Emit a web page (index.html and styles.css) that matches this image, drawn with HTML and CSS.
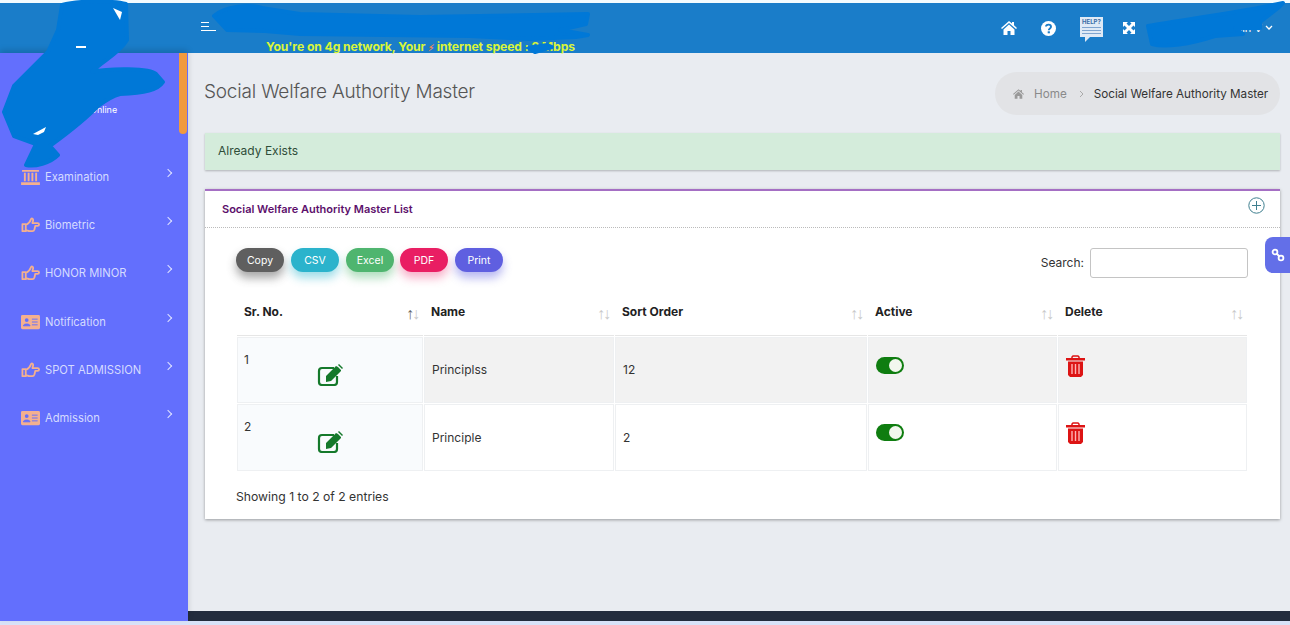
FILE: index.html
```html
<!DOCTYPE html>
<html lang="en">
<head>
  <meta charset="UTF-8" />
  <title>Social Welfare Authority Master</title>
  <link rel="stylesheet" href="styles.css">
</head>
<body>
  <svg class="defs" width="0" height="0">
    <symbol id="i-hand" viewBox="0 0 20 16">
      <path d="M1.500 7h3.500v7.500H1.500zM5 8c2.500-1 4.500-3 5.500-6 .5-1.500 2.500-1 2.300 1l-.8 3h5.500c2 0 2 3 0 3h-2.500l-.8 3.500c-.3 1-1 2-2.200 2H9c-1.500 0-2.500-1-4-1" fill="none" stroke="currentColor" stroke-width="1.900" stroke-linejoin="round"/>
    </symbol>
    <symbol id="i-card" viewBox="0 0 20 16">
      <rect width="20" height="15" y=".5" rx="1.500" fill="currentColor"/>
      <circle cx="6" cy="6" r="2" fill="#636ffd"/>
      <path d="M2.500 12c0-2.500 7-2.500 7 0zM11.500 5h6M11.500 8h6M11.500 11h6" fill="#636ffd" stroke="#636ffd"/>
    </symbol>
    <symbol id="i-bank" viewBox="0 0 20 17">
      <path d="M1 1h18v2H1zM0 14h20v3H0zM3 4h2v9H3zM7 4h2v9H7zM11 4h2v9h-2zM15 4h2v9h-2z" fill="currentColor"/>
    </symbol>
    <symbol id="i-edit" viewBox="0 0 26 22">
      <path d="M17 4H5a3 3 0 0 0-3 3v11a3 3 0 0 0 3 3h12a3 3 0 0 0 3-3v-6" fill="none" stroke="currentColor" stroke-width="2.200"/>
      <path d="M9 12 19 2l2 1 3 3v1L14 17l-5 1zM21 1l1-1 4 4-1 1z" fill="currentColor"/>
    </symbol>
    <symbol id="i-trash" viewBox="0 0 19 22">
      <path d="M6 3V2l1-1h5l1 1v1" fill="none" stroke="currentColor" stroke-width="1.500"/>
      <path d="M0 3h19v2.500H0zM2 6.500h15V20l-2 2H4l-2-2z" fill="currentColor"/>
      <path d="M6 9v10M9.500 9v10M13 9v10" stroke="#ffb3b3" stroke-width="1.400"/>
    </symbol>
  </svg>

  <div class="top-strip"></div>

  <header class="topbar">
    <div class="topbar-brand"></div>
    <div class="topbar-left">
      <span class="burger"><i></i><i></i><i></i></span>
      <div class="net-speed">You're on 4g network, Your <span class="bolt">&#9889;&#xFE0E;</span> internet speed : 2 Mbps</div>
    </div>
    <div class="topbar-right">
      <svg class="ico" width="16" height="14" viewBox="0 0 16 14"><path d="M8 0 0 7l1 1 7-6 7 6 1-1-3-2.700V1h-2v1.500zM2.500 8.500 8 3.500l5.500 5V14H9.500v-4h-3v4h-4z" fill="#fff"/></svg>
      <svg class="ico" width="15" height="15" viewBox="0 0 15 15"><circle cx="7.500" cy="7.500" r="7.500" fill="#fff"/><path d="M5 5.500C5 3 10 3 10 5.800 10 7.500 7.800 7.500 7.800 9.300" fill="none" stroke="#1a7dc9" stroke-width="1.900"/><rect x="6.700" y="10.300" width="2.200" height="2" fill="#1a7dc9"/></svg>
      <span class="help-bubble">
        <span class="help-word">HELP?</span>
        <i></i><i></i><i></i>
      </span>
      <svg class="ico expand" width="12" height="12" viewBox="0 0 12 12"><path d="M0 0h5L3.500 1.500 6 4l2.500-2.500L7 0h5v5l-1.500-1.500L8 6l2.500 2.500L12 7v5H7l1.500-1.500L6 8l-2.500 2.500L5 12H0V7l1.500 1.500L4 6 1.500 3.500 0 5z" fill="#fff"/></svg>
      <span class="user-name">Admin V</span>
      <svg class="chev" width="8" height="6" viewBox="0 0 8 6"><path d="m1 1 3 3 3-3" fill="none" stroke="#fff" stroke-width="1.300"/></svg>
    </div>
  </header>

  <div class="main">
    <aside class="sidebar">
      <div class="thumb"></div>
      <div class="user-block">
        <div class="user-status"><span class="dot"></span>Online</div>
      </div>
      <nav>
        <a class="nav-item"><svg class="nav-ico"><use href="#i-bank"/></svg><span>Examination</span><b></b></a>
        <a class="nav-item"><svg class="nav-ico"><use href="#i-hand"/></svg><span>Biometric</span><b></b></a>
        <a class="nav-item"><svg class="nav-ico"><use href="#i-hand"/></svg><span>HONOR MINOR</span><b></b></a>
        <a class="nav-item"><svg class="nav-ico"><use href="#i-card"/></svg><span>Notification</span><b></b></a>
        <a class="nav-item"><svg class="nav-ico"><use href="#i-hand"/></svg><span>SPOT ADMISSION</span><b></b></a>
        <a class="nav-item"><svg class="nav-ico"><use href="#i-card"/></svg><span>Admission</span><b></b></a>
      </nav>
    </aside>

    <div class="right-col">
      <main class="content">
        <div class="title-row">
          <h1>Social Welfare Authority Master</h1>
          <div class="crumbs">
            <svg width="11" height="10" viewBox="0 0 16 14"><path d="M8 0 0 7l1 1 7-6 7 6 1-1-3-2.700V1h-2v1.500zM2.500 8.500 8 3.500l5.500 5V14H9.500v-4h-3v4h-4z" fill="#999"/></svg>
            <span class="crumb-home">Home</span>
            <svg width="5" height="8" viewBox="0 0 5 8"><path d="m1 1 3 3-3 3" fill="none" stroke="#aaa"/></svg>
            <span class="crumb-now">Social Welfare Authority Master</span>
          </div>
        </div>

        <div class="alert">Already Exists</div>

        <section class="card">
          <div class="card-head">
            <h2>Social Welfare Authority Master List</h2>
            <svg width="17" height="17" viewBox="0 0 17 17"><circle cx="8.500" cy="8.500" r="7.700" fill="none" stroke="#3f7f8f"/><path d="M8.500 4v9M4 8.500h9" stroke="#3f7f8f"/></svg>
          </div>
          <div class="card-body">
            <div class="toolbar">
              <div class="btns">
                <button class="btn btn-copy">Copy</button>
                <button class="btn btn-csv">CSV</button>
                <button class="btn btn-excel">Excel</button>
                <button class="btn btn-pdf">PDF</button>
                <button class="btn btn-print">Print</button>
              </div>
              <label class="search">Search: <input type="text" /></label>
            </div>

            <table>
              <thead>
                <tr>
                  <th class="c1">Sr. No.<span class="sort"><em>↑</em>↓</span></th>
                  <th class="c2">Name<span class="sort">↑↓</span></th>
                  <th class="c3">Sort Order<span class="sort">↑↓</span></th>
                  <th class="c4">Active<span class="sort">↑↓</span></th>
                  <th class="c5">Delete<span class="sort">↑↓</span></th>
                </tr>
              </thead>
              <tbody>
                <tr class="odd">
                  <td class="sr"><div>1</div><svg class="edit"><use href="#i-edit"/></svg></td>
                  <td>Principlss</td>
                  <td>12</td>
                  <td class="top"><span class="switch"></span></td>
                  <td class="top"><svg class="trash"><use href="#i-trash"/></svg></td>
                </tr>
                <tr class="even">
                  <td class="sr"><div>2</div><svg class="edit"><use href="#i-edit"/></svg></td>
                  <td>Principle</td>
                  <td>2</td>
                  <td class="top"><span class="switch"></span></td>
                  <td class="top"><svg class="trash"><use href="#i-trash"/></svg></td>
                </tr>
              </tbody>
            </table>

            <div class="info">Showing 1 to 2 of 2 entries</div>
          </div>
        </section>
      </main>
      <footer class="footer"></footer>
    </div>
  </div>
  <div class="bottom-strip"></div>

  <a class="side-tab">
    <svg width="14" height="14" viewBox="0 0 14 14"><g fill="none" stroke="#fff" stroke-width="1.800"><circle cx="4" cy="4" r="2.400"/><circle cx="10" cy="10" r="2.400"/><path d="m5.500 5.500 3 3"/></g></svg>
  </a>

  <!-- blue marker scribbles that sit on top of the page -->
  <svg class="scribble" width="1290" height="625" viewBox="0 0 1290 625">
    <g fill="#0078d7" stroke="#0078d7" stroke-width="4" stroke-linejoin="round">
      <path d="M62 5C80 0 115 1 126 4L127 40C118 55 100 62 92 72 110 68 150 68 156 74L163 82C158 90 145 93 120 94 112 96 106 100 98 106 85 120 65 135 50 146L58 155C50 163 35 167 26 165L36 144 14 136 4 112 14 86 48 52 58 30Z"/>
      <path d="M214 16C225 6 250 4 262 8L300 14 420 17 588 14 586 24 560 30 588 35 576 37 530 39 470 36 300 34 265 31 227 30Z"/>
      <path d="M1148 26C1180 20 1230 14 1283 3L1278 8 1260 22 1260 28 1235 28 1243 34 1215 36C1190 44 1165 48 1152 44Z"/>
      <path d="M529 48 547 45 552 47 535 52Z"/>
    </g>
    <g fill="#fff">
      <path d="M113 8 122 12 120 20Z"/>
      <rect x="76" y="46" width="10" height="2"/>
      <path d="M33 134 46 127 44 132 38 135Z"/>
    </g>
  </svg>
</body>
</html>
```

FILE: styles.css
```css
* {
  box-sizing: border-box;
}
html, body {
  height: 625px;
  overflow: hidden;
}
body {
  margin: 0;
  font-family: Inter, "Open Sans", sans-serif;
  font-size: 12px;
  color: #333;
  background: #e9ecf1;
  display: flex;
  flex-direction: column;
}
.defs {
  position: absolute;
}
.top-strip {
  height: 3px;
  background: #f3fbfe;
}
.bottom-strip {
  height: 4px;
  background: #d8e2f8;
}

/* top bar */
.topbar {
  height: 50px;
  background: #1a7dc9;
  display: flex;
  color: #fff;
}
.topbar-brand {
  width: 188px;
}
.topbar-left {
  flex: 1;
  padding: 19px 0 0 13px;
  position: relative;
}
.burger {
  display: flex;
  flex-direction: column;
  gap: 3px;
  width: 15px;
}
.burger i {
  height: 1px;
  background: #fff;
}
.burger i:nth-child(1), .burger i:nth-child(2) {
  width: 8px;
}
.net-speed {
  margin: 9px 0 0 65px;
  color: #d9f53a;
  font-size: 12.200px;
  line-height: 14px;
  font-weight: 700;
  white-space: nowrap;
  letter-spacing: -0.1px;
}
.bolt {
  color: #e8875a;
  font-size: 9px;
}
.topbar-right {
  display: flex;
  align-items: center;
  padding: 0 17px 0 0;
  height: 50px;
}
.ico {
  display: block;
}
.topbar-right .ico {
  margin-right: 24px;
}
.topbar-right .expand {
  margin: 0 0 0 20px;
}
.help-bubble {
  width: 23px;
  height: 20px;
  margin: -3px 0 0 0;
  background: #dfeaf6;
  position: relative;
  display: flex;
  flex-direction: column;
  gap: 2px;
  padding: 1px 2px;
}
.help-bubble:after {
  content: "";
  position: absolute;
  left: 5px;
  top: 20px;
  border-top: 5px solid #dfeaf6;
  border-right: 5px solid transparent;
}
.help-word {
  font-size: 6px;
  line-height: 7px;
  color: #3a6ea5;
  font-weight: 700;
}
.help-bubble i {
  height: 1px;
  background: #7fa5d0;
}
.user-name {
  margin-left: 15px;
  width: 112px;
  font-size: 11px;
  text-align: right;
}
.chev {
  margin-left: 3px;
}

/* layout */
.main {
  flex: 1;
  display: flex;
  min-height: 0;
}
.sidebar {
  width: 188px;
  background: #636ffd;
  position: relative;
  box-shadow: 0 -3px 6px rgba(0, 0, 0, 0.15);
}
.thumb {
  position: absolute;
  right: 1px;
  top: 0;
  width: 8px;
  height: 81px;
  background: #f09a3e;
  border-radius: 0 0 4px 4px;
}
.user-block {
  height: 100px;
  padding: 51px 0 0 79px;
}
.user-status {
  font-size: 9px;
  color: #fff;
  display: flex;
  align-items: center;
  gap: 4px;
}
.dot {
  width: 7px;
  height: 7px;
  background: #3fc380;
  border-radius: 50%;
}
.nav-item {
  height: 48.200px;
  display: flex;
  align-items: center;
  padding: 0 17px 0 21px;
  color: #d5dbff;
  font-size: 11.200px;
}
.nav-item span {
  flex: 1;
}
.nav-item b {
  width: 6px;
  height: 6px;
  border-top: 1px solid #dfe3ff;
  border-right: 1px solid #dfe3ff;
  transform: rotate(45deg);
  margin-top: -8px;
}
.nav-ico {
  width: 19px;
  height: 16px;
  color: #f4b08f;
  margin-right: 5px;
}

/* content */
.right-col {
  flex: 1;
  display: flex;
  flex-direction: column;
  min-width: 0;
}
.content {
  flex: 1;
  padding: 19px 10px 0 17px;
}
.footer {
  height: 10px;
  background: #232c3d;
}
.title-row {
  display: flex;
  justify-content: space-between;
  align-items: center;
}
h1 {
  margin: 0 0 4px -1px;
  font-size: 19px;
  font-weight: 300;
  color: #555;
  letter-spacing: -0.2px;
}
.crumbs {
  height: 43px;
  width: 285px;
  background: #e2e3e6;
  border-radius: 22px;
  display: flex;
  align-items: center;
  padding-left: 18px;
  font-size: 11.700px;
}
.crumb-home {
  color: #8a8a8a;
  margin: 0 12px 0 10px;
}
.crumb-now {
  color: #333;
  margin-left: 10px;
  white-space: nowrap;
}
.alert {
  margin-top: 18px;
  height: 37px;
  background: #d4ecdb;
  color: #2f4d38;
  display: flex;
  align-items: center;
  padding: 0 0 2px 13px;
  box-shadow: 0 1px 2px rgba(0, 0, 0, 0.25);
}
.card {
  margin-top: 19px;
  height: 330px;
  background: #fff;
  border-top: 2px solid #a56fc4;
  box-shadow: 0 1px 3px rgba(0, 0, 0, 0.35);
}
.card-head {
  height: 37px;
  border-bottom: 1px dotted #bbb;
  display: flex;
  justify-content: space-between;
  padding: 6px 15px 0 17px;
}
h2 {
  margin: 5px 0 0;
  font-size: 11px;
  font-weight: 600;
  color: #5c0f6b;
}
.card-body {
  padding: 20px 32px 0 31px;
}
.toolbar {
  display: flex;
  justify-content: space-between;
  height: 30px;
}
.btns {
  display: flex;
  gap: 7px;
}
.btn {
  width: 48px;
  height: 24px;
  border: 0;
  border-radius: 12px;
  color: #fff;
  font: 10.500px Inter, sans-serif;
  padding: 0;
}
.btn-pdf {
  margin-left: -1px;
}
.btn-copy { background: #5f5f5f; box-shadow: 0 6px 10px rgba(60, 60, 60, 0.45); }
.btn-csv { background: #2bb3cc; box-shadow: 0 6px 10px rgba(43, 179, 204, 0.45); }
.btn-excel { background: #4fb56f; box-shadow: 0 6px 10px rgba(79, 181, 111, 0.45); }
.btn-pdf { background: #e91e63; box-shadow: 0 6px 10px rgba(233, 30, 99, 0.35); }
.btn-print { background: #5f5fe0; box-shadow: 0 6px 10px rgba(95, 95, 224, 0.45); }
.search {
  display: flex;
  align-items: center;
  gap: 6px;
  font-size: 12px;
  line-height: 28px;
}
.search input {
  width: 158px;
  height: 30px;
  border: 1px solid #c4c4c4;
  border-radius: 3px;
}

/* table */
table {
  margin-top: 17px;
  width: 1012px;
  table-layout: fixed;
  border-collapse: separate;
  border-spacing: 1px;
  font-size: 12px;
}
th {
  height: 40px;
  text-align: left;
  padding: 0 6px 8px 7px;
  font-weight: 700;
  font-size: 12px;
  color: #222;
  border-bottom: 1px solid #e6e6e6;
  position: relative;
}
.c1 { width: 186px; }
.c2 { width: 190px; }
.c3 { width: 252px; }
.c4 { width: 189px; }
.c5 { width: 189px; }
.sort {
  position: absolute;
  right: 5px;
  top: 9px;
  font-family: "Liberation Sans", sans-serif;
  font-size: 16px;
  font-weight: 400;
  color: #c9c9c9;
  letter-spacing: -2px;
}
.sort em {
  font-style: normal;
  color: #666;
}
td {
  height: 66px;
  border: 1px solid #eef0f2;
  padding: 0 7px 2px;
}
.even td {
  height: 67px;
  padding-bottom: 1px;
}
.odd td {
  background: #f2f2f2;
}
td.sr, .odd td.sr {
  background: #f9fbfd;
  vertical-align: top;
  padding: 14px 6px 0;
}
td.top {
  vertical-align: top;
  padding: 19px 7px 0;
}
.edit {
  display: block;
  width: 26px;
  height: 22px;
  color: #15792b;
  margin: -3px 0 0 73px;
}
.switch {
  display: block;
  width: 28px;
  height: 17px;
  border-radius: 9px;
  background: #0f7d10;
  position: relative;
}
.switch:after {
  content: "";
  position: absolute;
  right: 2px;
  top: 2px;
  width: 13px;
  height: 13px;
  border-radius: 50%;
  background: #f2f7ee;
}
.trash {
  display: block;
  width: 19px;
  height: 22px;
  color: #dd1414;
  margin-top: -2px;
}
.info {
  margin-top: 17px;
  font-size: 12.200px;
  color: #333;
}

/* floats over the page edge */
.side-tab {
  position: absolute;
  right: 0;
  top: 237px;
  width: 25px;
  height: 36px;
  background: #636fe8;
  border-radius: 8px 0 0 8px;
  display: flex;
  align-items: center;
  justify-content: center;
}
.scribble {
  position: absolute;
  left: 0;
  top: 0;
  pointer-events: none;
}
```
